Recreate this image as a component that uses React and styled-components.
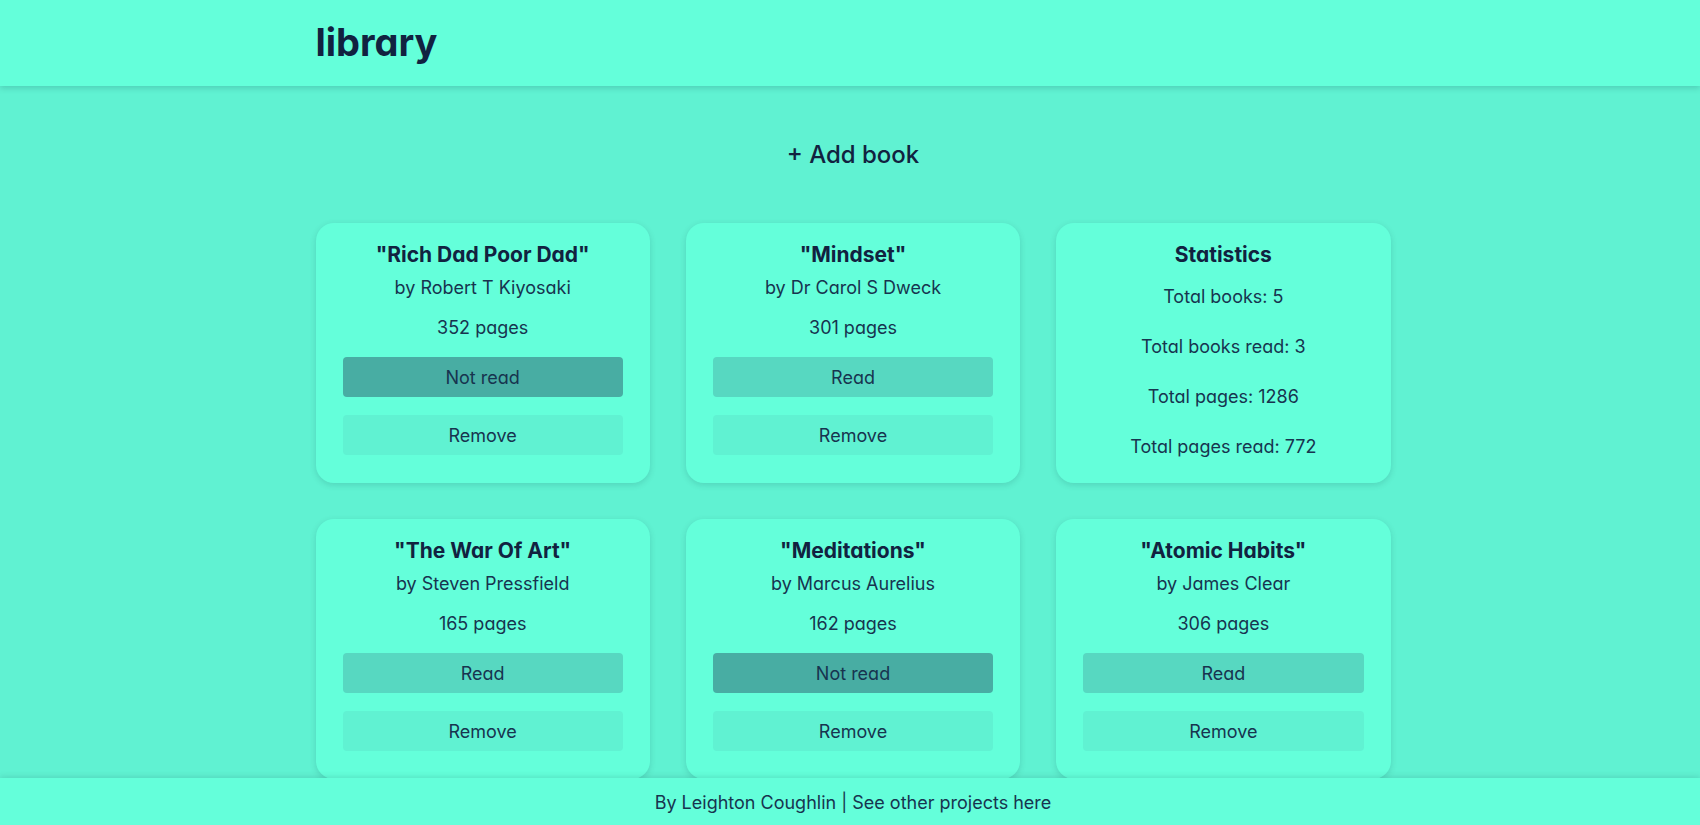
import React from "react";
import styled, { createGlobalStyle, ThemeProvider } from "styled-components";

const theme = {
  mint: "#64ffda",
  page: "#60f2d2",
  read: "#57d8c1",
  unread: "#48ada3",
  ink: "#112240",
  text: "#17344f",
};

const GlobalStyle = createGlobalStyle`
  *, *::before, *::after { box-sizing: border-box; }
  body {
    margin: 0;
    background: ${theme.page};
    color: ${theme.text};
    font-family: Inter, "Open Sans", sans-serif;
    font-feature-settings: "cv11";
    font-size: 18px;
    line-height: 24px;
  }
  h1, h2, p, ul { margin: 0; padding: 0; }
`;

const Page = styled.div`
  height: 100vh;
  display: flex;
  flex-direction: column;
`;

const Header = styled.header`
  position: relative;
  z-index: 1;
  flex: none;
  padding: 19px 0 21px 6px;
  background: ${({ theme }) => theme.mint};
  box-shadow: 0 2px 6px rgba(10, 60, 70, 0.2);
`;

const Container = styled.div`
  width: 100%;
  max-width: 1075px;
  margin: 0 auto;
`;

const Logo = styled.h1`
  color: ${({ theme }) => theme.ink};
  font-size: 38px;
  line-height: 46px;
  font-weight: 700;
`;

const Main = styled.main`
  flex: 1;
  min-height: 0;
  overflow-y: auto;
  scrollbar-width: none;
  padding-left: 6px;
`;

const AddButton = styled.button`
  display: block;
  margin: 54px auto;
  padding: 0;
  border: 0;
  background: none;
  color: ${({ theme }) => theme.ink};
  font: inherit;
  font-feature-settings: inherit;
  font-size: 24px;
  line-height: 29px;
  font-weight: 500;
  cursor: pointer;
`;

const Grid = styled.div`
  display: grid;
  grid-template-columns: repeat(3, 1fr);
  grid-auto-rows: 1fr;
  gap: 36px;
  padding-bottom: 36px;
`;

const Card = styled.article`
  display: flex;
  flex-direction: column;
  padding: 19px 27px 24px;
  border-radius: 18px;
  background: ${({ theme }) => theme.mint};
  box-shadow: 0 2px 6px rgba(10, 60, 70, 0.16);
  text-align: center;
`;

const Title = styled.h2`
  color: ${({ theme }) => theme.ink};
  font-size: 21px;
  line-height: 26px;
  font-weight: 700;
`;

const Author = styled.p`
  margin-top: 8px;
`;

const Pages = styled.p`
  margin: 16px 0 17px;
`;

const Actions = styled.div`
  display: grid;
  gap: 18px;
`;

const ActionButton = styled.button`
  height: 40px;
  padding: 2px 6px 0;
  border: 0;
  border-radius: 4px;
  background: ${({ theme, $tone }) => theme[$tone]};
  color: inherit;
  font: inherit;
  font-feature-settings: inherit;
  cursor: pointer;
`;

const StatList = styled.ul`
  display: flex;
  flex-direction: column;
  gap: 26px;
  margin-top: 17px;
  list-style: none;
`;

const Footer = styled.footer`
  position: relative;
  z-index: 1;
  flex: none;
  padding: 13px 0 10px 6px;
  background: ${({ theme }) => theme.mint};
  box-shadow: 0 -1px 6px rgba(10, 60, 70, 0.16);
  text-align: center;
`;

const FooterLink = styled.a`
  color: inherit;
  text-decoration: none;
`;

const books = [
  { title: "Rich Dad Poor Dad", author: "Robert T Kiyosaki", pages: 352, read: false },
  { title: "Mindset", author: "Dr Carol S Dweck", pages: 301, read: true },
  { title: "The War Of Art", author: "Steven Pressfield", pages: 165, read: true },
  { title: "Meditations", author: "Marcus Aurelius", pages: 162, read: false },
  { title: "Atomic Habits", author: "James Clear", pages: 306, read: true },
];

const sumPages = (list) => list.reduce((total, book) => total + book.pages, 0);

function BookCard({ book }) {
  return (
    <Card>
      <Title>{`"${book.title}"`}</Title>
      <Author>{`by ${book.author}`}</Author>
      <Pages>{`${book.pages} pages`}</Pages>
      <Actions>
        <ActionButton type="button" $tone={book.read ? "read" : "unread"}>
          {book.read ? "Read" : "Not read"}
        </ActionButton>
        <ActionButton type="button" $tone="page">Remove</ActionButton>
      </Actions>
    </Card>
  );
}

function Statistics() {
  const finished = books.filter((book) => book.read);
  return (
    <Card>
      <Title>Statistics</Title>
      <StatList>
        <li>{`Total books: ${books.length}`}</li>
        <li>{`Total books read: ${finished.length}`}</li>
        <li>{`Total pages: ${sumPages(books)}`}</li>
        <li>{`Total pages read: ${sumPages(finished)}`}</li>
      </StatList>
    </Card>
  );
}

export default function App() {
  return (
    <ThemeProvider theme={theme}>
      <GlobalStyle />
      <Page>
        <Header>
          <Container>
            <Logo>library</Logo>
          </Container>
        </Header>
        <Main>
          <Container>
            <AddButton type="button">+ Add book</AddButton>
            <Grid>
              {books.slice(0, 2).map((book) => <BookCard key={book.title} book={book} />)}
              <Statistics />
              {books.slice(2).map((book) => <BookCard key={book.title} book={book} />)}
            </Grid>
          </Container>
        </Main>
        <Footer>
          By Leighton Coughlin | <FooterLink href="#projects">See other projects here</FooterLink>
        </Footer>
      </Page>
    </ThemeProvider>
  );
}
